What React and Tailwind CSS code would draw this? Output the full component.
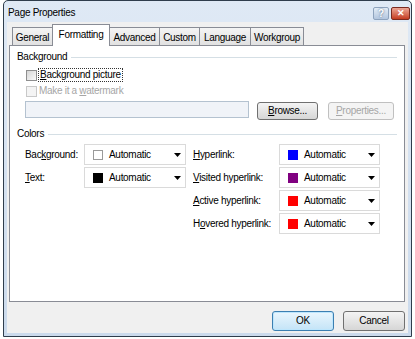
import React from "react";

const F = { fontFamily: '"Liberation Sans", Arial, sans-serif', letterSpacing: "-0.3px" };

function U({ children }) {
  return <span className="underline underline-offset-[1px]">{children}</span>;
}

function Tab({ label, selected, w, first }) {
  if (selected) {
    return (
      <div
        className="relative z-10 -mb-px -ml-px flex h-[22px] items-start justify-center border border-b-0 border-[#898c95] bg-white pt-[4px] text-[10px] leading-[12px] text-black"
        style={{ width: w }}
      >
        {label}
      </div>
    );
  }
  return (
    <div
      className={
        "mt-[3px] flex h-[18px] items-start justify-center border border-b-0 border-[#898c95] bg-gradient-to-b from-[#f4f4f4] to-[#e1e1e1] pt-[4px] text-[10px] leading-[12px] text-black " +
        (first ? "" : "-ml-px")
      }
      style={{ width: w }}
    >
      {label}
    </div>
  );
}

function Checkbox({ disabled }) {
  return (
    <div
      className={
        "h-[11px] w-[11px] border " +
        (disabled
          ? "border-[#c8c8c8] bg-[#f4f4f4]"
          : "border-[#8f8f8f] bg-gradient-to-br from-[#d6d6d6] to-[#fafafa]")
      }
    />
  );
}

function Dropdown({ swatch, swatchBorder }) {
  return (
    <div className="flex h-[21px] items-center border border-[#dadada] bg-white pl-[8px] pr-[4px]">
      <div
        className={"h-[10px] w-[10px] " + (swatchBorder ? "border border-[#9a9a9a]" : "")}
        style={{ backgroundColor: swatch }}
      />
      <span className="ml-[6px] flex-1 text-[10px] leading-none text-black">Automatic</span>
      <svg width="7" height="4" viewBox="0 0 7 4">
        <path d="M0 0H7L3.5 4Z" fill="#000" />
      </svg>
    </div>
  );
}

function Btn({ children, disabled, def, className = "" }) {
  return (
    <div
      className={
        "flex items-center justify-center rounded-[3px] border text-[10px] leading-none " +
        (disabled
          ? "border-[#c0c0c0] bg-[#f4f4f4] text-[#a6a6a6] "
          : def
          ? "border-[#3c7fb1] bg-gradient-to-b from-[#eaf6fd] to-[#c4e4f7] text-black shadow-[inset_0_0_0_1px_#bde6fd] "
          : "border-[#707070] bg-gradient-to-b from-[#f4f4f4] to-[#d6d6d6] text-black ") +
        className
      }
    >
      {children}
    </div>
  );
}

export default function App() {
  return (
    <div className="h-[339px] w-[415px] bg-white" style={F}>
      <div className="ml-[3px] flex h-[337px] w-[409px] flex-col rounded-t-[5px] border border-[#2f3d4c] bg-gradient-to-b from-[#dfe9f5] to-[#cbdaec]">
        {/* title bar */}
        <div className="flex h-[21px] items-start justify-between pl-[4px] pr-[1px]">
          <span className="mt-[6px] text-[10px] leading-[12px] text-black">Page Properties</span>
          <div className="mt-[6px] flex gap-[2px]">
            <div className="flex h-[13px] w-[16px] items-center justify-center rounded-[2px] border border-[#8ea3bd] bg-gradient-to-b from-[#e3ecf6] to-[#b3c6de] text-[10px] font-bold leading-none text-white [text-shadow:0_0_2px_#3b5575]">
              ?
            </div>
            <div className="flex h-[13px] w-[19px] items-center justify-center rounded-[2px] border border-[#7a2a20] bg-gradient-to-b from-[#eba595] to-[#c43a1e] text-[9px] font-bold leading-none text-white">
              ✕
            </div>
          </div>
        </div>
        {/* client area */}
        <div className="mx-[3px] mb-[3px] flex flex-1 flex-col bg-[#f0f0f0] pl-[2px] pr-[3px] pt-[2px]">
          <div className="flex pl-[3px]">
            <Tab label="General" w={41} first />
            <Tab label="Formatting" w={58} selected />
            <Tab label="Advanced" w={51} />
            <Tab label="Custom" w={41} />
            <Tab label="Language" w={52} />
            <Tab label="Workgroup" w={54} />
          </div>
          <div className="h-[257px] border border-[#898c95] bg-white pl-[7px] pt-[5px] text-[10px] text-black">
            <div className="flex h-[12px] items-center leading-[12px]">
              <span>Background</span>
              <div className="ml-[4px] mr-[7px] h-px flex-1 bg-[#d5dfe5]" />
            </div>
            <div className="ml-[9px] mt-[5px] flex h-[14px] items-center gap-[1px]">
              <Checkbox />
              <span className="border border-dotted border-[#333] px-px leading-[12px]">
                <U>B</U>ackground picture
              </span>
            </div>
            <div className="ml-[9px] mt-[2px] flex h-[14px] items-center gap-[2px] text-[#a6a6a6]">
              <Checkbox disabled />
              <span className="leading-[12px]">
                Make it a <U>w</U>atermark
              </span>
            </div>
            <div className="mt-[3px] flex items-start">
              <div className="ml-[8px] h-[17px] w-[224px] border border-[#b4c2d0] bg-[#f0f3f8]" />
              <Btn className="ml-[8px] mt-[1px] h-[18px] w-[61px]">
                <U>B</U>rowse...
              </Btn>
              <Btn disabled className="ml-[10px] mt-[1px] h-[18px] w-[66px]">
                <U>P</U>roperties...
              </Btn>
            </div>
            <div className="mt-[8px] flex h-[12px] items-center leading-[12px]">
              <span>Colors</span>
              <div className="ml-[4px] mr-[7px] h-px flex-1 bg-[#d5dfe5]" />
            </div>
            <div className="ml-[8px] mt-[4px] grid grid-cols-[59px_102px_93px_101px] items-center gap-y-[2px] whitespace-nowrap">
              <span>
                Bac<U>k</U>ground:
              </span>
              <Dropdown swatch="#ffffff" swatchBorder />
              <span className="pl-[7px]">
                <U>H</U>yperlink:
              </span>
              <Dropdown swatch="#0000ff" />
              <span>
                <U>T</U>ext:
              </span>
              <Dropdown swatch="#000000" />
              <span className="pl-[7px]">
                <U>V</U>isited hyperlink:
              </span>
              <Dropdown swatch="#800080" />
              <span />
              <span />
              <span className="pl-[7px]">
                <U>A</U>ctive hyperlink:
              </span>
              <Dropdown swatch="#ff0000" />
              <span />
              <span />
              <span className="pl-[7px]">
                H<U>o</U>vered hyperlink:
              </span>
              <Dropdown swatch="#ff0000" />
            </div>
          </div>
          <div className="mt-[9px] flex justify-end gap-[9px] pr-[0px]">
            <Btn def className="h-[20px] w-[62px]">
              OK
            </Btn>
            <Btn className="h-[20px] w-[62px]">Cancel</Btn>
          </div>
        </div>
      </div>
    </div>
  );
}
